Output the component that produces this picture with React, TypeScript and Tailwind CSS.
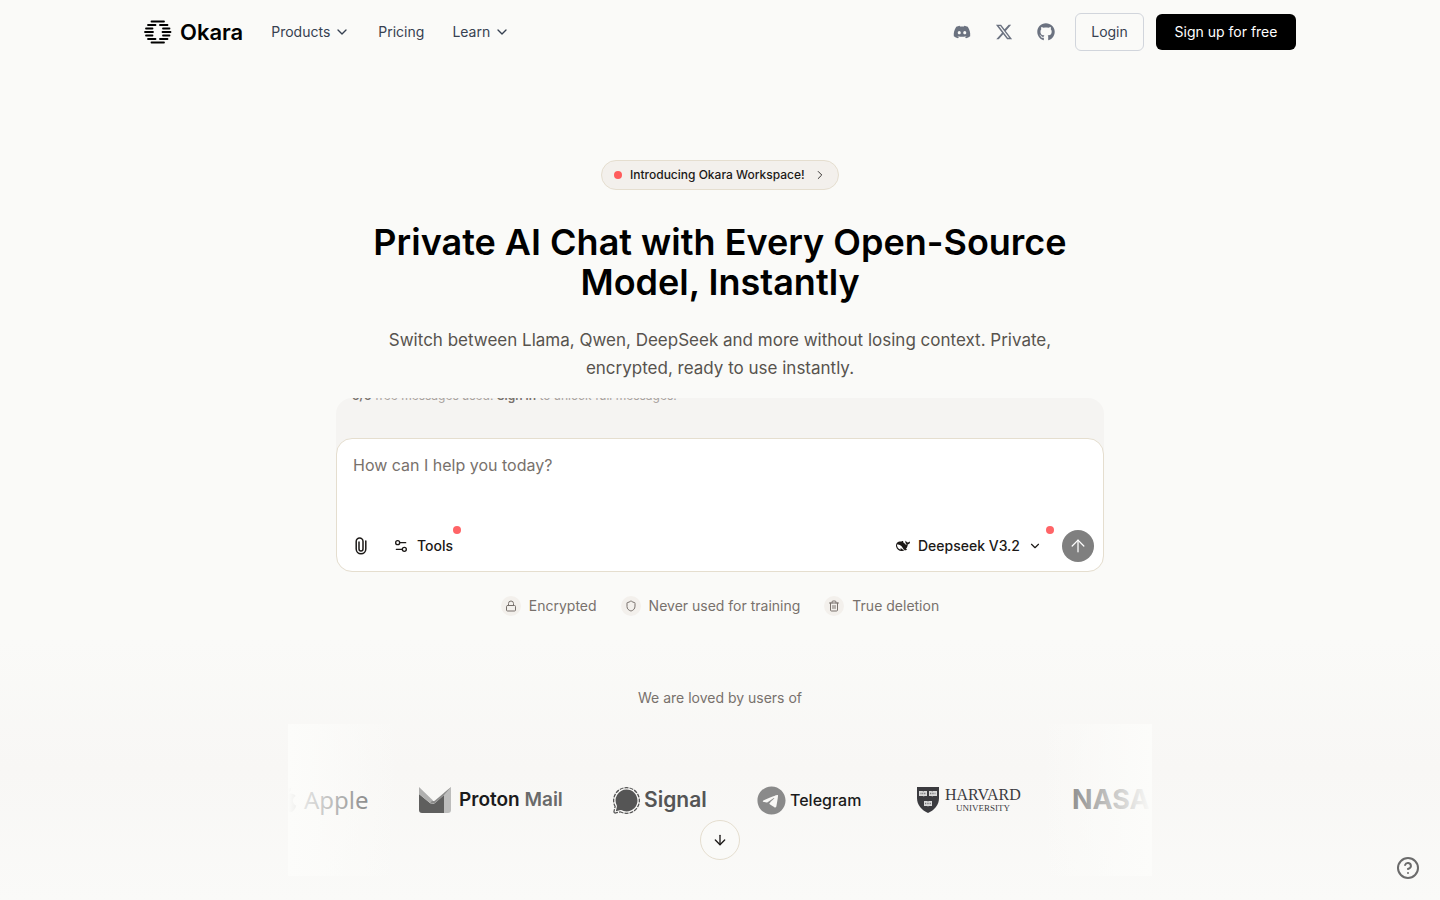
import type { ReactNode } from 'react';
import { ArrowDown, ArrowUp, ChevronDown, ChevronRight, HelpCircle, Lock, Settings2, Shield, Trash2 } from 'lucide-react';
import { FaApple, FaDiscord, FaGithub, FaTelegram, FaXTwitter } from 'react-icons/fa6';
import { SiSignal } from 'react-icons/si';

function OkaraMark() {
  return (
    <svg width="28" height="24" viewBox="0 0 28 24" fill="none" stroke="black" strokeWidth="1.8" strokeLinecap="round" aria-hidden="true">
      <path d="M7.5 1.5h12.5M4 5h7.5M16 5h7.5M2 8.5h6.5M19 8.5h6.5M1 12h8M18.5 12h8M2 15.5h6.5M19 15.5h6.5M4 19h7.5M16 19h7.5M7.5 22.5h12.5" />
    </svg>
  );
}

function DeepseekIcon() {
  return (
    <svg width="14" height="14" viewBox="0 0 24 24" fill="currentColor" aria-hidden="true">
      <path d="M23.748 4.482c-.254-.124-.364.113-.512.234-.051.039-.094.09-.137.136-.372.397-.806.657-1.373.626-.829-.046-1.537.214-2.163.848-.133-.782-.575-1.248-1.247-1.548-.352-.156-.708-.311-.955-.65-.172-.241-.219-.51-.305-.774-.055-.16-.11-.323-.293-.35-.2-.031-.278.136-.356.276-.313.572-.434 1.202-.422 1.84.027 1.436.633 2.58 1.838 3.393.137.093.172.187.129.323-.082.28-.18.552-.266.833-.055.179-.137.217-.329.14a5.526 5.526 0 01-1.736-1.18c-.857-.828-1.631-1.742-2.597-2.458a11.365 11.365 0 00-.689-.471c-.985-.957.13-1.743.388-1.836.27-.098.093-.432-.779-.428-.872.004-1.67.295-2.687.684a3.055 3.055 0 01-.465.137 9.597 9.597 0 00-2.883-.102c-1.885.21-3.39 1.102-4.497 2.623C.082 8.606-.231 10.684.152 12.85c.403 2.284 1.569 4.175 3.36 5.653 1.858 1.533 3.997 2.284 6.438 2.14 1.482-.085 3.133-.284 4.994-1.86.47.234.962.327 1.78.397.63.059 1.236-.03 1.705-.128.735-.156.684-.837.419-.961-2.155-1.004-1.682-.595-2.113-.926 1.096-1.296 2.746-2.642 3.392-7.003.05-.347.007-.565 0-.845-.004-.17.035-.237.23-.256a4.173 4.173 0 001.545-.475c1.396-.763 1.96-2.015 2.093-3.517.02-.23-.004-.467-.247-.588zM11.581 18c-2.089-1.642-3.102-2.183-3.52-2.16-.392.024-.321.471-.235.763.09.288.207.486.371.739.114.167.192.416-.113.603-.673.416-1.842-.14-1.897-.167-1.361-.802-2.5-1.86-3.301-3.307-.774-1.393-1.224-2.887-1.298-4.482-.02-.386.093-.522.477-.592a4.696 4.696 0 011.529-.039c2.132.312 3.946 1.265 5.468 2.774.868.86 1.525 1.887 2.202 2.891.72 1.066 1.494 2.082 2.48 2.914.348.292.625.514.891.677-.802.09-2.14.11-3.054-.614z" />
    </svg>
  );
}

function ClipIcon() {
  return (
    <svg width="12" height="18" viewBox="0 0 12 18" fill="none" stroke="currentColor" strokeWidth="1.5" strokeLinecap="round" aria-hidden="true">
      <path d="M10.800 4v8a4.800 4.800 0 0 1-9.600 0V4.400a3.400 3.400 0 0 1 6.800 0V12a2 2 0 0 1-4 0V5" />
    </svg>
  );
}

function ProtonIcon() {
  return (
    <svg width="32" height="26" viewBox="0 0 32 26" className="shrink-0" aria-hidden="true">
      <path d="M0 7l11 9a4 4 0 0 0 5 0L25 8v18H3a3 3 0 0 1-3-3z" fill="#5f5f5e" />
      <path d="M25 6l7-6v23a3 3 0 0 1-3 3h-4z" fill="#bdbdbc" />
      <path d="M0 0l14 13.500L11 16 0 7z" fill="#b0b0af" />
      <path d="M32 0L16 13.500a3 3 0 0 1-3 .200L11 16c2 1.200 3.500 1 5 0L25 8z" fill="#8a8a89" />
    </svg>
  );
}

function HarvardShield() {
  return (
    <svg width="22" height="26" viewBox="0 0 22 26" aria-hidden="true">
      <path d="M0 0h22v11c0 7-4.500 12-11 15C4.500 23 0 18 0 11z" fill="#3b3b3f" />
      <path d="M2 4h3.500l.8.600.8-.6H10v5H7.600l-.8.600L6 9H2zM12 4h2.400l.8.600.8-.6h4v5h-4l-.8.600-.8-.6H12zM7 14h3.200l.8.600.8-.6H15v5h-3.200l-.8.600-.8-.6H7z" fill="#d9d9d9" />
      <path d="M3.500 6.500H9M13 6.500h5.500M8 16.500h6" stroke="#77777a" strokeWidth="1.500" strokeDasharray="1 .7" />
    </svg>
  );
}

function Badge({ icon, children }: { icon: ReactNode; children: ReactNode }) {
  return (
    <li className="flex items-center gap-2">
      <span className="flex size-5 items-center justify-center rounded-full bg-[#f3f0ec]">{icon}</span>
      {children}
    </li>
  );
}

export default function App() {
  return (
    <div className="relative flex min-h-screen flex-col bg-[#fafaf8] font-['Inter',sans-serif] text-[#1c1917]">
      <header className="mx-auto flex h-16 w-full max-w-6xl items-center justify-between text-sm text-[#374151]">
        <div className="flex items-center">
          <a href="#" className="mr-7 flex items-center gap-2 text-black">
            <OkaraMark />
            <span className="text-[22px] leading-8 font-semibold">Okara</span>
          </a>
          <nav className="flex items-center gap-7">
            <button className="flex items-center gap-1">
              Products
              <ChevronDown size={16} />
            </button>
            <a href="#">Pricing</a>
            <button className="flex items-center gap-1">
              Learn
              <ChevronDown size={16} />
            </button>
          </nav>
        </div>
        <div className="flex items-center gap-3">
          <div className="mr-2 flex items-center gap-6 text-[#6b7280]">
            <a href="#" aria-label="Discord"><FaDiscord size={18} /></a>
            <a href="#" aria-label="X"><FaXTwitter size={18} /></a>
            <a href="#" aria-label="GitHub"><FaGithub size={18} /></a>
          </div>
          <button className="h-[38px] w-[69px] rounded-md border border-gray-300">Login</button>
          <button className="h-9 w-[140px] rounded-md bg-black text-white">Sign up for free</button>
        </div>
      </header>

      <main className="flex flex-col items-center">
        <a
          href="#"
          className="mt-24 flex h-[30px] w-[238px] items-center rounded-full border border-[#e5decf] bg-[#f3f0ec] pl-3 text-xs font-medium"
        >
          <span className="mr-2 size-2 rounded-full bg-[#ff5c5c]" />
          Introducing Okara Workspace!
          <ChevronRight size={14} strokeWidth={1.5} className="mr-[11px] ml-auto" />
        </a>

        <h1 className="mt-8 max-w-3xl text-center text-4xl leading-10 font-semibold text-black">
          Private AI Chat with Every Open-Source
          <br />
          Model, Instantly
        </h1>
        <p className="mt-6 max-w-3xl text-center text-[17px] leading-7 text-[#57534e]">
          Switch between Llama, Qwen, DeepSeek and more without losing context. Private,
          <br />
          encrypted, ready to use instantly.
        </p>

        <section className="mt-4 w-full max-w-3xl rounded-2xl bg-[#f5f4f2]">
          <div className="h-10 overflow-hidden rounded-t-2xl px-4">
            <p className="-mt-2.5 text-xs leading-4 text-[#a8a29e]">
              <b className="font-semibold text-[#78716c]">5/5</b> free messages used. <b className="font-semibold text-[#78716c]">Sign in</b> to unlock full messages.
            </p>
          </div>
          <div className="flex h-[134px] flex-col justify-between rounded-2xl border border-[#e5decf] bg-white">
            <textarea
              aria-label="Message"
              placeholder="How can I help you today?"
              className="h-16 w-full resize-none px-4 pt-3.5 text-base leading-6 outline-none placeholder:text-[#78716c]"
            />
            <div className="flex items-center justify-between pr-[9px] pb-[9px] pl-4 text-sm font-medium">
              <div className="flex items-center">
                <button aria-label="Attach file" className="mr-6 flex w-4 justify-center">
                  <ClipIcon />
                </button>
                <button className="relative flex items-center gap-2">
                  <Settings2 size={16} />
                  Tools
                  <span className="absolute -top-2.5 -right-2 size-2 rounded-full bg-[#ff6467]" />
                </button>
              </div>
              <div className="flex items-center gap-5">
                <button className="relative flex items-center gap-2">
                  <DeepseekIcon />
                  Deepseek V3.2
                  <ChevronDown size={14} />
                  <span className="absolute -top-2.5 -right-3 size-2 rounded-full bg-[#ff6467]" />
                </button>
                <button aria-label="Send" className="flex size-8 items-center justify-center rounded-full bg-[#7f7f7f] text-white">
                  <ArrowUp size={20} strokeWidth={1.5} />
                </button>
              </div>
            </div>
          </div>
        </section>

        <ul className="mt-6 flex items-center gap-6 text-sm text-[#78716c]">
          <Badge icon={<Lock size={12} strokeWidth={2} />}>Encrypted</Badge>
          <Badge icon={<Shield size={12} strokeWidth={2} />}>Never used for training</Badge>
          <Badge icon={<Trash2 size={12} strokeWidth={2} />}>True deletion</Badge>
        </ul>
      </main>

      <section className="mt-6 flex grow flex-col items-center bg-linear-to-b from-[#fafaf8] via-[#f8f7f5] to-[#fafaf8] pt-12 text-sm text-[#78716c]">
        <h2>We are loved by users of</h2>
        <div className="relative mt-4 w-full max-w-[864px] overflow-hidden">
          <div className="-ml-4 flex h-[152px] items-center gap-[50px] whitespace-nowrap *:shrink-0">
            <div className="flex w-[97px] items-center gap-1 text-[#5f5f5f]">
              <FaApple size={28} />
              <span className="font-['Noto_Sans',sans-serif] text-2xl">Apple</span>
            </div>
            <div className="flex w-36 items-center gap-2 text-[19px] font-semibold text-[#6a6a6a]">
              <ProtonIcon />
              <span><span className="text-[#1b1b1b]">Proton</span> Mail</span>
            </div>
            <div className="flex w-[94px] items-center gap-1 text-[21px] font-semibold text-[#555555]">
              <SiSignal size={27} />
              Signal
            </div>
            <div className="flex w-[110px] items-center gap-1 text-base font-medium text-[#1b1b1b]">
              <FaTelegram size={29} className="text-[#8a8a8a]" />
              Telegram
            </div>
            <div className="flex w-[105px] items-center gap-1.5 font-['Liberation_Serif',serif] text-[#3b3b3f]">
              <HarvardShield />
              <div className="flex flex-col items-center gap-0.5">
                <span className="text-base leading-3.5">HARVARD</span>
                <span className="text-[9px] leading-2">UNIVERSITY</span>
              </div>
            </div>
            <div className="text-[27px] font-bold text-[#666666]">NASA</div>
          </div>
          <div className="absolute inset-y-0 left-0 w-28 bg-linear-to-r from-[#fcfcfa] to-transparent" />
          <div className="absolute inset-y-0 right-0 w-28 bg-linear-to-l from-[#fcfcfa] to-transparent" />
        </div>
      </section>

      <button
        aria-label="Scroll down"
        className="absolute bottom-10 left-1/2 flex size-10 -translate-x-1/2 items-center justify-center rounded-full border border-[#e5decf] bg-[#fafaf8]"
      >
        <ArrowDown size={16} />
      </button>
      <button aria-label="Help" className="fixed right-5 bottom-5 text-[#6b6b6b]">
        <HelpCircle size={24} />
      </button>
    </div>
  );
}
